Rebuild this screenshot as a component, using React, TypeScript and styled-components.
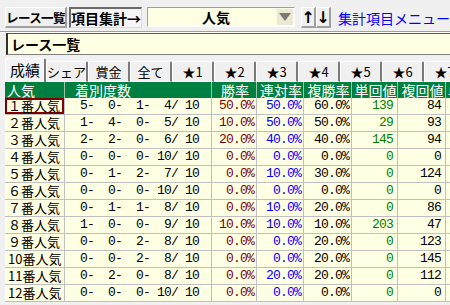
import styled, { createGlobalStyle } from 'styled-components';

const GlobalStyle = createGlobalStyle`
  html, body {
    margin: 0;
    padding: 0;
    background: #f0f0f0;
    overflow: hidden;
  }
  body {
    width: 450px;
    height: 305px;
    font-family: "Noto Sans CJK JP", sans-serif;
  }
`;

const tabs = ['成績', 'シェア', '賞金', '全て', '★1', '★2', '★3', '★4', '★5', '★6', '★7'];

const columns = '60px 147px 45px 47px 48px 46px 48px 60px';

// [label, 1着, 2着, 3着, 着外, 勝率, 連対率, 複勝率, 単回値, 複回値]
const rows: (string | number)[][] = [
  ['１番人気', 5, 0, 1, 4, '50.0%', '50.0%', '60.0%', 139, 84],
  ['２番人気', 1, 4, 0, 5, '10.0%', '50.0%', '50.0%', 29, 93],
  ['３番人気', 2, 2, 0, 6, '20.0%', '40.0%', '40.0%', 145, 94],
  ['４番人気', 0, 0, 0, 10, '0.0%', '0.0%', '0.0%', 0, 0],
  ['５番人気', 0, 1, 2, 7, '0.0%', '10.0%', '30.0%', 0, 124],
  ['６番人気', 0, 0, 0, 10, '0.0%', '0.0%', '0.0%', 0, 0],
  ['７番人気', 0, 1, 1, 8, '0.0%', '10.0%', '20.0%', 0, 86],
  ['８番人気', 1, 0, 0, 9, '10.0%', '10.0%', '10.0%', 203, 47],
  ['９番人気', 0, 0, 2, 8, '0.0%', '0.0%', '20.0%', 0, 123],
  ['10番人気', 0, 0, 2, 8, '0.0%', '0.0%', '20.0%', 0, 145],
  ['11番人気', 0, 2, 0, 8, '0.0%', '20.0%', '20.0%', 0, 112],
  ['12番人気', 0, 0, 0, 10, '0.0%', '0.0%', '0.0%', 0, 0],
];

const pad = (v: string | number, n: number) => String(v).padStart(n, ' ');

function App() {
  return (
    <>
      <GlobalStyle />
      <Screen>
        <TopBar>
          <ToolButton width={71} tight>
            レース一覧
          </ToolButton>
          <ToolButton width={78} pressed>
            項目集計→
          </ToolButton>
          <Combo>
            <ComboText>人気</ComboText>
            <DropArrow>
              <svg width="12" height="8" viewBox="0 0 12 8">
                <polygon points="0,0 12,0 6,8" fill="#7a7a72" />
              </svg>
            </DropArrow>
          </Combo>
          <ArrowGroup>
            <ArrowButton>↑</ArrowButton>
            <ArrowButton>↓</ArrowButton>
          </ArrowGroup>
          <MenuLink>集計項目メニュー</MenuLink>
        </TopBar>
        <Separator />
        <TitleBox>レース一覧</TitleBox>
        <TabRow>
          {tabs.map((t, i) => (
            <Tab key={t} active={i === 0}>
              {t}
            </Tab>
          ))}
        </TabRow>
        <Grid>
          <HeaderRow>
            <Head align="left">人気</Head>
            <Head align="left" indent={10}>
              着別度数
            </Head>
            <Head>勝率</Head>
            <Head>連対率</Head>
            <Head>複勝率</Head>
            <Head>単回値</Head>
            <Head>複回値</Head>
            <Head align="left">単</Head>
          </HeaderRow>
          {rows.map((r, idx) => (
            <DataRow key={idx}>
              <LabelCell selected={idx === 0}>{r[0]}</LabelCell>
              <CountCell>
                {'  ' + r[1] + '-  ' + r[2] + '-  ' + r[3] + '- ' + pad(r[4], 2) + '/ 10'}
              </CountCell>
              <NumCell color="#800000">{r[5]}</NumCell>
              <NumCell color="#0000ff">{r[6]}</NumCell>
              <NumCell>{r[7]}</NumCell>
              <NumCell color="#008000" right={4}>
                {r[8]}
              </NumCell>
              <NumCell right={4}>{r[9]}</NumCell>
              <NumCell />
            </DataRow>
          ))}
        </Grid>
      </Screen>
    </>
  );
}

export default App;

const Screen = styled.div`
  width: 450px;
  height: 305px;
  padding-top: 7px;
  box-sizing: border-box;
  overflow: hidden;
`;

const TopBar = styled.div`
  display: flex;
  align-items: stretch;
  height: 21px;
  padding-left: 5px;
  white-space: nowrap;
`;

const ToolButton = styled.div<{ width: number; pressed?: boolean; tight?: boolean }>`
  display: flex;
  align-items: center;
  justify-content: center;
  box-sizing: border-box;
  width: ${p => p.width}px;
  margin-right: 2px;
  font-size: ${p => (p.tight ? 12.5 : 14)}px;
  font-weight: bold;
  letter-spacing: ${p => (p.tight ? -0.6 : 0)}px;
  color: #000;
  background: ${p => (p.pressed ? '#f6f6f6' : '#f0f0f0')};
  border-style: solid;
  border-width: ${p => (p.pressed ? '2px 1px 1px 2px' : '1px 2px 2px 1px')};
  border-color: ${p =>
    p.pressed ? '#6a6a6a #dcdcdc #dcdcdc #6a6a6a' : '#ffffff #a0a0a0 #a0a0a0 #ffffff'};
`;

const Combo = styled.div`
  display: flex;
  align-items: center;
  box-sizing: border-box;
  width: 185px;
  height: 20px;
  margin-left: 3px;
  background: #ffffe3;
  border-style: solid;
  border-width: 1px;
  border-color: #a0a0a0 #ffffff #ffffff #a0a0a0;
`;

const ComboText = styled.div`
  flex: 1;
  text-align: center;
  padding-left: 7px;
  font-size: 14px;
  font-weight: bold;
  color: #000;
`;

const DropArrow = styled.div`
  display: flex;
  align-items: center;
  justify-content: center;
  width: 16px;
  height: 16px;
  margin-right: 1px;
  background: #ebe9d3;
`;

const ArrowGroup = styled.div`
  display: flex;
  margin-left: 6px;
`;

const ArrowButton = styled.div`
  display: flex;
  align-items: center;
  justify-content: center;
  box-sizing: border-box;
  width: 15px;
  font-family: "DejaVu Sans", sans-serif;
  font-size: 16px;
  font-weight: bold;
  color: #000;
  background: #f0f0f0;
  border-style: solid;
  border-width: 1px 2px 2px 1px;
  border-color: #ffffff #a0a0a0 #a0a0a0 #ffffff;
`;

const MenuLink = styled.div`
  display: flex;
  align-items: center;
  margin-left: 7px;
  font-size: 14px;
  color: #0000ff;
`;

const Separator = styled.div`
  margin-top: 3px;
  border-top: 1px solid #a0a0a0;
  border-bottom: 1px solid #ffffff;
`;

const TitleBox = styled.div`
  display: flex;
  align-items: center;
  box-sizing: border-box;
  height: 22px;
  margin-left: 6px;
  padding-left: 3px;
  background: #ffffe3;
  border-top: 1px solid #5a5a5a;
  border-left: 2px solid #303030;
  border-bottom: 1px solid #808080;
  font-size: 14px;
  font-weight: bold;
  color: #000;
`;

const TabRow = styled.div`
  display: flex;
  align-items: flex-end;
  height: 24px;
  margin-top: 3px;
  padding-left: 5px;
`;

const Tab = styled.div<{ active?: boolean }>`
  display: flex;
  align-items: center;
  justify-content: center;
  flex: none;
  box-sizing: border-box;
  width: ${p => (p.active ? 41 : 42)}px;
  height: ${p => (p.active ? 24 : 21)}px;
  padding-bottom: ${p => (p.active ? 3 : 1)}px;
  font-size: ${p => (p.active ? 15 : 13)}px;
  color: #000;
  background: ${p => (p.active ? '#f4f4f4' : '#f0f0f0')};
  border-top: 1px solid #ffffff;
  border-left: 1px solid #ffffff;
  border-right: 2px solid #7a7a7a;
  border-bottom: ${p => (p.active ? 'none' : '1px solid #ffffff')};
  border-radius: 2px 2px 0 0;
`;

const Grid = styled.div`
  margin-left: 5px;
  width: 501px;
`;

const HeaderRow = styled.div`
  display: grid;
  grid-template-columns: ${columns};
  height: 16px;
  background: #008040;
`;

const DataRow = styled.div`
  display: grid;
  grid-template-columns: ${columns};
  height: 17px;
`;

const Head = styled.div<{ align?: string; indent?: number }>`
  box-sizing: border-box;
  padding-left: ${p => p.indent ?? 2}px;
  color: #ffffff;
  font-size: 14px;
  line-height: 16px;
  text-align: ${p => p.align ?? 'center'};
  white-space: nowrap;
  overflow: hidden;
  border-right: 1px solid #9cc4a8;
`;

const Cell = styled.div`
  box-sizing: border-box;
  height: 17px;
  background: #ffffe3;
  border-right: 1px solid #c0c0c0;
  border-bottom: 1px solid #c0c0c0;
  white-space: pre;
  overflow: hidden;
  line-height: 16px;
`;

const LabelCell = styled(Cell)<{ selected?: boolean }>`
  padding-left: 3px;
  font-size: 13px;
  color: #000;
  box-shadow: ${p => (p.selected ? 'inset 0 0 0 2px #800000' : 'none')};
`;

const CountCell = styled(Cell)`
  padding-left: 1px;
  font-family: "Liberation Mono", monospace;
  font-size: 13px;
  letter-spacing: -0.8px;
  color: #000;
`;

const NumCell = styled(Cell)<{ color?: string; right?: number }>`
  padding-right: ${p => p.right ?? 2}px;
  text-align: right;
  font-family: "Liberation Mono", monospace;
  font-size: 13px;
  letter-spacing: -0.8px;
  color: ${p => p.color ?? '#000'};
`;
